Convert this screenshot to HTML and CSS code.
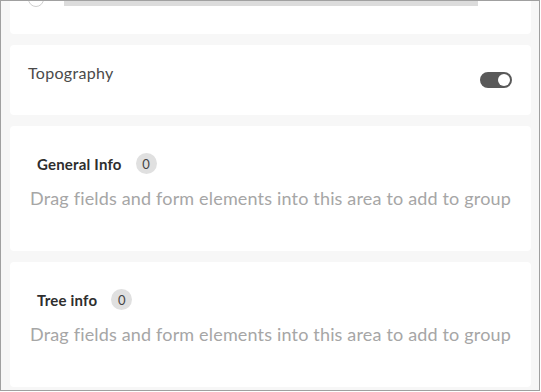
FILE: index.html
```html
<!DOCTYPE html>
<html lang="en">
<head>
<meta charset="utf-8">
<title>Form groups</title>
<link rel="stylesheet" href="styles.css">
</head>
<body>
<div class="frame">
  <div class="list">
    <section class="card card-choice">
      <div class="choice-row">
        <span class="radio"></span>
        <span class="bar"></span>
      </div>
    </section>
    <section class="card card-toggle">
      <span class="toggle-label">Topography</span>
      <span class="switch"><span class="knob"></span></span>
    </section>
    <section class="card group">
      <div class="group-head">
        <span class="group-title">General Info</span>
        <span class="count">0</span>
      </div>
      <p class="group-hint">Drag fields and form elements into this area to add to group</p>
    </section>
    <section class="card group">
      <div class="group-head">
        <span class="group-title">Tree info</span>
        <span class="count">0</span>
      </div>
      <p class="group-hint">Drag fields and form elements into this area to add to group</p>
    </section>
  </div>
</div>
</body>
</html>
```
FILE: styles.css
```css
* { box-sizing: border-box; }

html, body {
  margin: 0;
  padding: 0;
  background: #ffffff;
}

body {
  font-family: Lato, "Open Sans", "Liberation Sans", sans-serif;
}

.frame {
  width: 540px;
  height: 391px;
  border: 1px solid #a0a0a0;
  background: #f7f7f7;
  overflow: hidden;
}

.list {
  display: flex;
  flex-direction: column;
  gap: 11px;
  padding: 0 8px 0 9px;
  margin-top: -30px;
}

.card {
  background: #ffffff;
  border-radius: 4px;
}

/* first (scrolled) card */
.card-choice {
  padding: 20px 18px 27px 18px;
}

.choice-row {
  display: flex;
  align-items: center;
  gap: 20px;
  height: 16px;
}

.radio {
  width: 16px;
  height: 16px;
  border-radius: 50%;
  border: 1px solid #cfcfcf;
  background: #fff;
  flex: none;
}

.bar {
  width: 414px;
  height: 14px;
  background: #dcdcdc;
}

/* toggle card */
.card-toggle {
  height: 70px;
  padding: 18px 19px 0 18px;
  display: flex;
  justify-content: space-between;
}

.toggle-label {
  font-size: 16px;
  line-height: 20px;
  letter-spacing: 0.3px;
  color: #4a4a4a;
}

.switch {
  margin-top: 9px;
  width: 32px;
  height: 16px;
  border-radius: 8px;
  background: #595959;
  display: flex;
  align-items: center;
  justify-content: flex-end;
  padding-right: 2px;
}

.knob {
  width: 12px;
  height: 12px;
  border-radius: 50%;
  background: #ffffff;
}

/* group cards */
.group {
  height: 125px;
  padding: 27px 20px 0 20px;
}

.group-head {
  display: flex;
  align-items: center;
  gap: 14px;
  padding-left: 7px;
  height: 21px;
}

.group-title {
  font-size: 15px;
  font-weight: 700;
  letter-spacing: 0.2px;
  color: #2e2e2e;
}

.count {
  width: 21px;
  height: 21px;
  border-radius: 50%;
  background: #e0e0e0;
  color: #444;
  font-size: 13px;
  display: flex;
  align-items: center;
  justify-content: center;
}

.group-hint {
  margin: 12px 0 0 0;
  font-size: 18px;
  line-height: 24px;
  letter-spacing: 0.17px;
  color: #a6a6a6;
  white-space: nowrap;
}
```
